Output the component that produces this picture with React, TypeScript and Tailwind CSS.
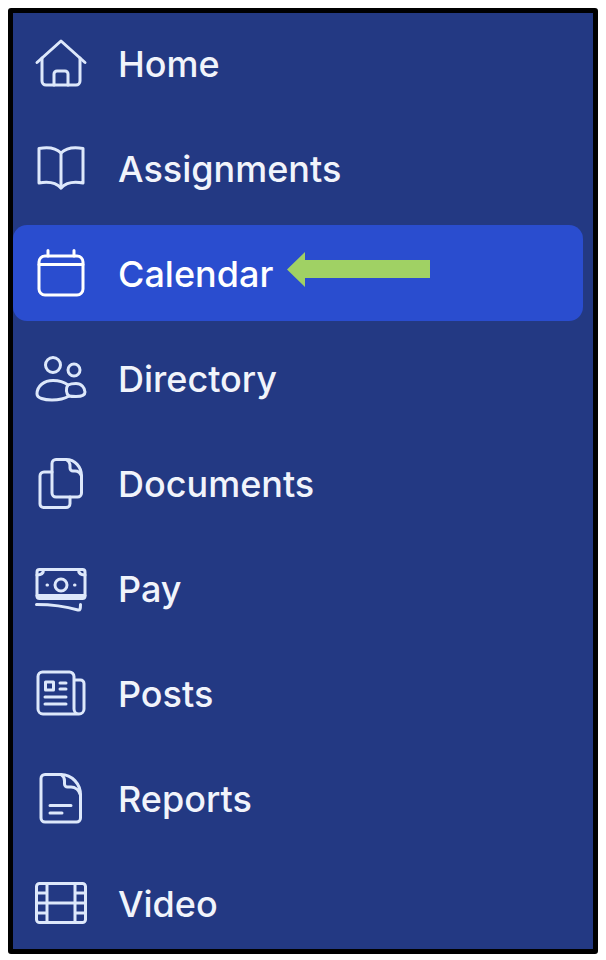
import type { ReactNode } from 'react'

const icons: Record<string, ReactNode> = {
  home: (
    <>
      <path d="M3 24.500 27 3l24 21.500" />
      <path d="M8 20v23a4 4 0 0 0 4 4h30a4 4 0 0 0 4-4V20" />
      <path d="M20 47V36a3 3 0 0 1 3-3h8a3 3 0 0 1 3 3v11" />
    </>
  ),
  book: (
    <>
      <path d="M27 10C22 5 13 4 5 5.500V40C13 38.500 22 39.500 27 45C32 39.500 41 38.500 49 40V5.500C41 4 32 5 27 10Z" />
      <path d="M27 10V45" />
    </>
  ),
  calendar: (
    <>
      <rect x="5" y="8" width="44" height="39" rx="6" />
      <path d="M5 16.500H49M14 2.500V8M40 2.500V8" />
    </>
  ),
  users: (
    <>
      <circle cx="19" cy="12" r="7.500" />
      <circle cx="40" cy="17" r="6" />
      <path d="M19 27.500C10 27.500 3 33 3 41C3 45 10 47 18 47C26 47 31 45.500 35 43C32 41 31.500 35 34 32C30 29 25 27.500 19 27.500Z" />
      <path d="M34 32C36 31 39 30.500 42 30.500C47.500 30.500 51 35 51 39C51 42 47 43.500 42 43.500C39.500 43.500 37 43.500 35 43" />
    </>
  ),
  documents: (
    <>
      <path d="M18 14H10a4 4 0 0 0-4 4v28a3.500 3.500 0 0 0 3.500 3.500H32a4 4 0 0 0 4-4V39" />
      <path d="M22 1.500H32C41 1.500 47.500 9 47.500 18V35a4 4 0 0 1-4 4H22a4 4 0 0 1-4-4V5.500a4 4 0 0 1 4-4Z" />
      <path d="M32 1.500C35 3 36 5 36 8V10a3 3 0 0 0 3 3H41C44 13 46 14 47.500 18" />
    </>
  ),
  pay: (
    <>
      <rect x="3" y="6.500" width="48" height="29" rx="2.500" />
      <path d="M3 12C7 12 9.500 10 9.500 6.500M51 12C47 12 44.500 10 44.500 6.500M3 32.500H51" />
      <circle cx="27" cy="22" r="6" />
      <path d="M13 22h.5M40.500 22h.5" />
      <path d="M2.500 41.500C17 41.500 32 43.500 44 47C46 47.500 46.500 46 46.500 41.500" />
    </>
  ),
  posts: (
    <>
      <path d="M40 12H46.500a3.500 3.500 0 0 1 3.500 3.500V41a5 5 0 0 1-5 5H9a5 5 0 0 1-5-5V8.500A4.500 4.500 0 0 1 8.500 4H35.500A4.500 4.500 0 0 1 40 8.500V41a5 5 0 0 0 5 5" />
      <rect x="11.500" y="14" width="8" height="8" />
      <path d="M26 15H32M26 21H32M11 29H32M11 36H32" />
    </>
  ),
  reports: (
    <>
      <path d="M11 1.500H27C38 1.500 46.500 11 46.500 22V45a4 4 0 0 1-4 4H11a4 4 0 0 1-4-4V5.500a4 4 0 0 1 4-4Z" />
      <path d="M27 1.500C29.500 3 30.500 5 30.500 8V11a3 3 0 0 0 3 3H37C41 14 45 17 46.500 22" />
      <path d="M16 32.500H37M16 40H28" />
    </>
  ),
  video: (
    <>
      <rect x="2.500" y="5.500" width="49" height="39" rx="3" />
      <path d="M13 5.500V44.500M41 5.500V44.500M13 25H41M2.500 15H13M2.500 25H13M2.500 35H13M41 15H51.500M41 25H51.500M41 35H51.500" />
    </>
  ),
}

const items = [
  { label: 'Home', icon: 'home' },
  { label: 'Assignments', icon: 'book' },
  { label: 'Calendar', icon: 'calendar', active: true },
  { label: 'Directory', icon: 'users' },
  { label: 'Documents', icon: 'documents' },
  { label: 'Pay', icon: 'pay' },
  { label: 'Posts', icon: 'posts' },
  { label: 'Reports', icon: 'reports' },
  { label: 'Video', icon: 'video' },
]

export default function App() {
  return (
    <div className="h-[960px] w-[606px] bg-white pl-[8px] pr-[8px] pt-[8px] pb-[6px] font-['Inter',sans-serif]">
      <nav className="flex h-full flex-col gap-[9px] overflow-hidden rounded-[3px] border-[5px] border-black bg-[#233983] pr-[10px] pt-[2px]">
        {items.map((item) => (
          <div
            key={item.label}
            className={
              item.active
                ? 'relative flex h-[96px] shrink-0 items-center rounded-[14px] bg-[#2a4dcf] pt-[4px] pl-[21px] text-white'
                : 'relative flex h-[96px] shrink-0 items-center pt-[4px] pl-[21px] text-[#f1f4fb]'
            }
          >
            <svg
              viewBox="0 0 54 54"
              fill="none"
              strokeWidth="3"
              strokeLinecap="round"
              strokeLinejoin="round"
              className={item.active ? 'h-[54px] w-[54px] stroke-white' : 'h-[54px] w-[54px] stroke-[#dde8fb]'}
            >
              {icons[item.icon]}
            </svg>
            <span className="ml-[30px] mt-[-2px] text-[36px] font-medium leading-none">{item.label}</span>
            {item.active ? (
              <svg viewBox="0 0 143 35" className="absolute left-[274px] top-[27px] h-[35px] w-[143px] fill-[#a0d164]">
                <path d="M0 17.500 18 0V8H143V26H18V35Z" />
              </svg>
            ) : null}
          </div>
        ))}
      </nav>
    </div>
  )
}
